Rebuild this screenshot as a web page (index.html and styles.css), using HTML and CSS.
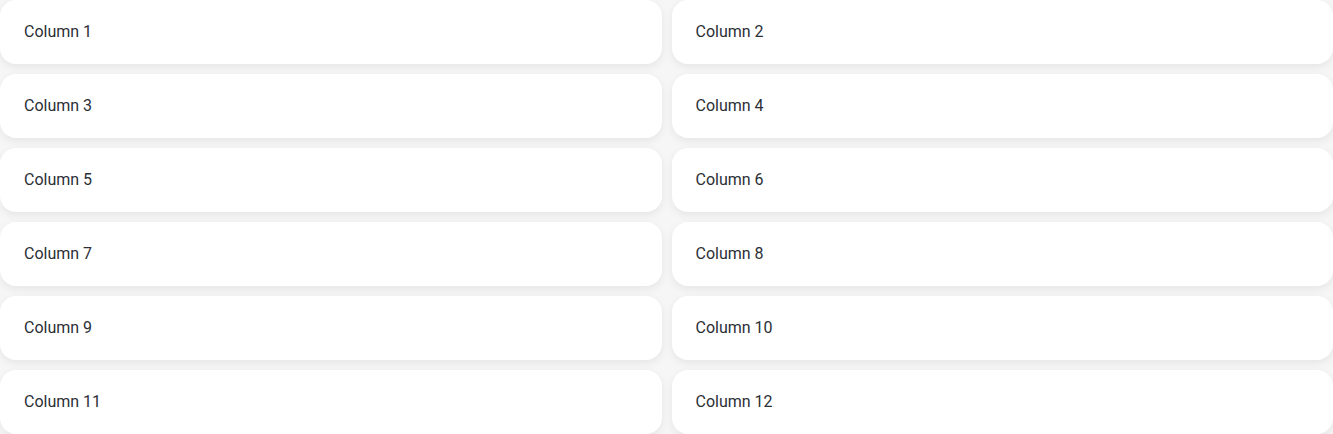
FILE: index.html
```html
<!DOCTYPE html>
<html>
<head>
<meta charset="utf-8">
<link rel="stylesheet" href="styles.css">
</head>
<body>
<div class="grid">
  <div class="card">Column 1</div>
  <div class="card">Column 2</div>
  <div class="card">Column 3</div>
  <div class="card">Column 4</div>
  <div class="card">Column 5</div>
  <div class="card">Column 6</div>
  <div class="card">Column 7</div>
  <div class="card">Column 8</div>
  <div class="card">Column 9</div>
  <div class="card">Column 10</div>
  <div class="card">Column 11</div>
  <div class="card">Column 12</div>
</div>
</body>
</html>
```
FILE: styles.css
```css
html, body {
  margin: 0;
  padding: 0;
  background: #f6f6f6;
}
.grid {
  display: grid;
  grid-template-columns: 1fr 1fr;
  gap: 10px;
}
.card {
  height: 64px;
  box-sizing: border-box;
  padding: 20px 24px;
  background: #ffffff;
  border-radius: 16px;
  box-shadow: 0 3px 8px rgba(0, 0, 0, 0.07);
  font-family: Roboto, "Noto Sans", sans-serif;
  font-size: 16px;
  line-height: 24px;
  color: #2b2f36;
}
```
